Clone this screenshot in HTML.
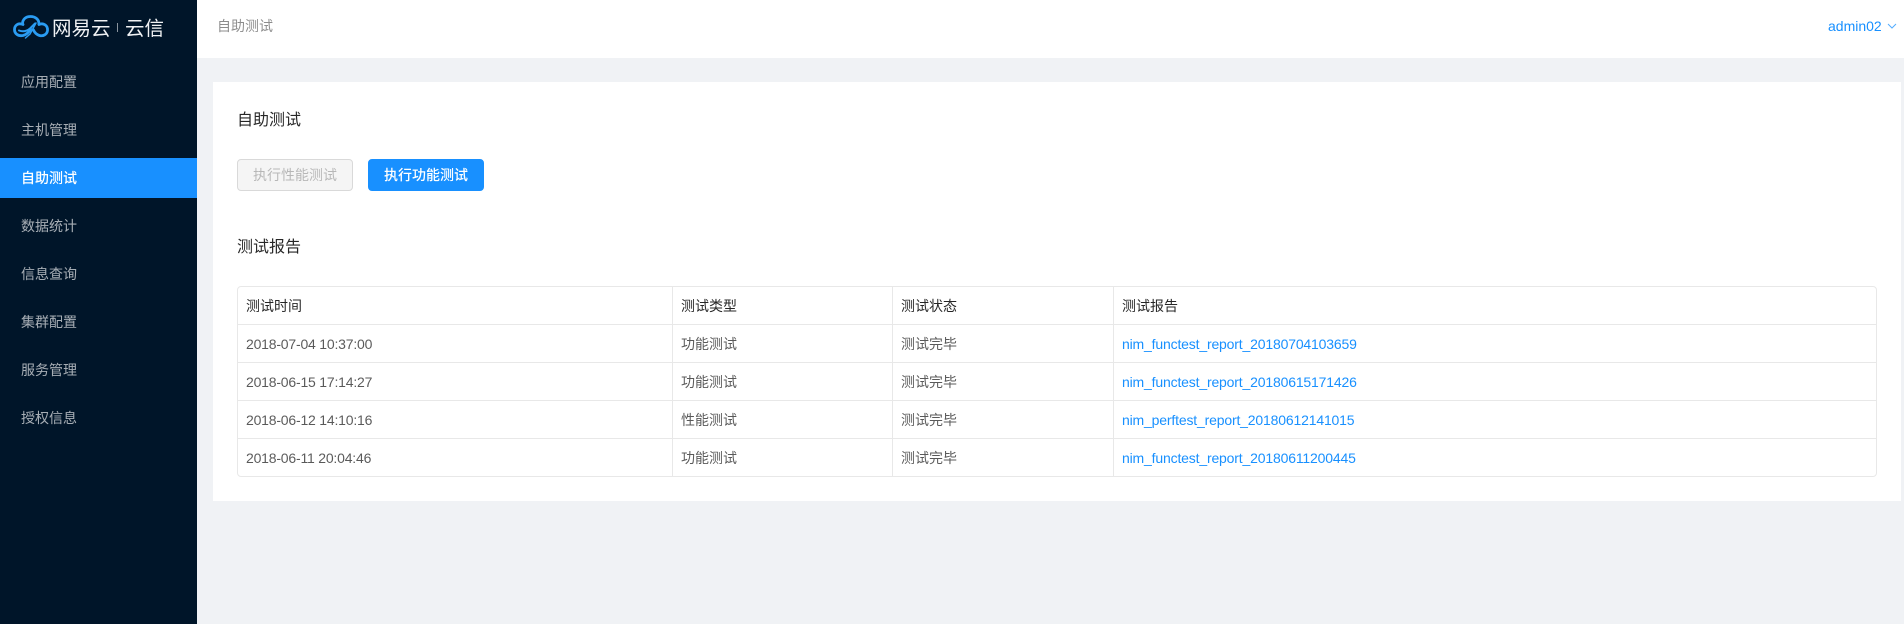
<!DOCTYPE html>
<html><head><meta charset="utf-8"><style>
*{box-sizing:border-box;margin:0;padding:0}
html,body{width:1904px;height:624px;overflow:hidden;background:#f0f2f5;font-family:"Liberation Sans","Noto Sans CJK SC",sans-serif;font-size:14px}
div,a,svg{position:absolute;white-space:nowrap}
.side{left:0;top:0;width:197px;height:624px;background:#001529}
.mi{left:0;width:197px;height:40px;line-height:40px;padding-left:21px;color:rgba(255,255,255,.65)}
.mi.on{background:#1890ff;color:#fff;font-weight:500}
.top{left:197px;top:0;width:1707px;height:58px;background:#fff}
.card{left:213px;top:82px;width:1688px;height:419px;background:#fff}
.h{font-size:16px;line-height:24px;color:rgba(0,0,0,.85)}
.btn{top:159px;height:32px;line-height:30px;text-align:center;border-radius:4px;border:1px solid}
.tb{left:237px;top:286px;width:1640px;height:191px;border:1px solid #e8e8e8;border-radius:4px}
.hl{left:237px;width:1640px;height:1px;background:#e8e8e8}
.vl{top:286px;width:1px;height:191px;background:#e8e8e8}
.c{line-height:20px;color:rgba(0,0,0,.65)}
.th{color:rgba(0,0,0,.85)}
.d{letter-spacing:-.2px}
.l{color:#1890ff;letter-spacing:-.17px}
.logo{top:13px;font-size:19.500px;line-height:28px;color:#f0f2f4;font-family:"Noto Sans CJK SC",sans-serif;font-weight:400}
</style></head><body>
<div class="side">
<svg style="left:12px;top:14px" width="38" height="26" viewBox="0 0 38 26" fill="none" stroke="#2a9cf2" stroke-width="2.800" stroke-linecap="round"><path d="M11 10.500C6 8.500 2.500 11.500 2.500 15.500C2.500 19.500 6 22.500 11 21.500C15 20.500 17 18 18.500 15"/><path d="M10.500 10C10.500 5 14 2.500 18.500 2.500C23.500 2.500 27 5.500 27 10"/><path d="M27 10.500C31.500 8.500 36 11.500 35.500 16.500C35 20.500 31 22.500 27.500 21.500C24.500 20.500 22.500 18.500 21.500 16"/><path d="M7 16.500C11 18 15 17 18 14.500L23 9.500" stroke-width="2"/><path d="M24 9L18 20L13.500 24" stroke-width="1.500"/></svg>
<div class="logo" style="left:52px">网易云</div>
<div style="left:117px;top:23px;width:1px;height:9px;background:#8a949e"></div>
<div class="logo" style="left:125px">云信</div>
<div class="mi" style="top:62px">应用配置</div>
<div class="mi" style="top:110px">主机管理</div>
<div class="mi on" style="top:158px">自助测试</div>
<div class="mi" style="top:206px">数据统计</div>
<div class="mi" style="top:254px">信息查询</div>
<div class="mi" style="top:302px">集群配置</div>
<div class="mi" style="top:350px">服务管理</div>
<div class="mi" style="top:398px">授权信息</div>
</div>
<div class="top"></div>
<div style="left:217px;top:16px;line-height:20px;color:rgba(0,0,0,.45)">自助测试</div>
<div style="left:1828px;top:16px;line-height:20px;color:#1890ff">admin02</div>
<svg style="left:1887px;top:23px" width="10" height="7" viewBox="0 0 10 7" fill="none" stroke="#1890ff" stroke-opacity=".75" stroke-width="1"><path d="M1 1L5 5L9 1"/></svg>
<div class="card"></div>
<div class="h" style="left:237px;top:109px">自助测试</div>
<div class="btn" style="left:237px;width:116px;background:#f5f5f5;border-color:#d9d9d9;color:rgba(0,0,0,.25)">执行性能测试</div>
<div class="btn" style="left:368px;width:116px;background:#1890ff;border-color:#1890ff;color:#fff;font-weight:500">执行功能测试</div>
<div class="h" style="left:237px;top:236px">测试报告</div>
<div class="tb"></div>
<div class="hl" style="top:324px"></div><div class="hl" style="top:362px"></div><div class="hl" style="top:400px"></div><div class="hl" style="top:438px"></div>
<div class="vl" style="left:672px"></div><div class="vl" style="left:892px"></div><div class="vl" style="left:1113px"></div>
<div class="c th" style="left:246px;top:296px">测试时间</div><div class="c th" style="left:681px;top:296px">测试类型</div><div class="c th" style="left:901px;top:296px">测试状态</div><div class="c th" style="left:1122px;top:296px">测试报告</div>
<div class="c d" style="left:246px;top:334px">2018-07-04 10:37:00</div><div class="c" style="left:681px;top:334px">功能测试</div><div class="c" style="left:901px;top:334px">测试完毕</div><div class="c l" style="left:1122px;top:334px">nim_functest_report_20180704103659</div>
<div class="c d" style="left:246px;top:372px">2018-06-15 17:14:27</div><div class="c" style="left:681px;top:372px">功能测试</div><div class="c" style="left:901px;top:372px">测试完毕</div><div class="c l" style="left:1122px;top:372px">nim_functest_report_20180615171426</div>
<div class="c d" style="left:246px;top:410px">2018-06-12 14:10:16</div><div class="c" style="left:681px;top:410px">性能测试</div><div class="c" style="left:901px;top:410px">测试完毕</div><div class="c l" style="left:1122px;top:410px">nim_perftest_report_20180612141015</div>
<div class="c d" style="left:246px;top:448px">2018-06-11 20:04:46</div><div class="c" style="left:681px;top:448px">功能测试</div><div class="c" style="left:901px;top:448px">测试完毕</div><div class="c l" style="left:1122px;top:448px">nim_functest_report_20180611200445</div>
</body></html>
